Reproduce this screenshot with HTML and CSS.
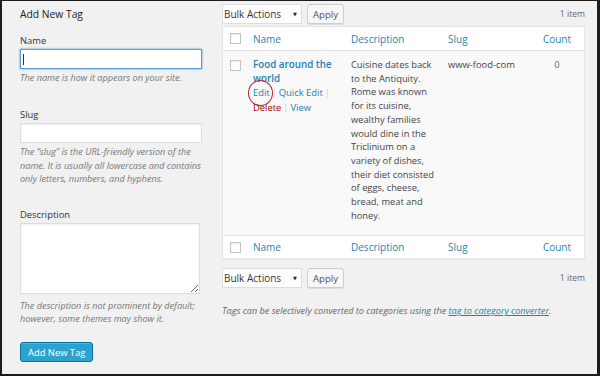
FILE: index.html
```
<!DOCTYPE html>
<html lang="en">

<head>
    <meta charset="UTF-8">
    <meta name="viewport" content="width=device-width, initial-scale=1.0">
    <title>Tags</title>
    <link rel="stylesheet" href="styles.css">
</head>

<body>
    <div class="screen">
        <div class="col-form">
            <h3 class="form-title">Add New Tag</h3>
            <div class="form-field field-name">
                <label>Name</label>
                <div class="text-input focused"><span class="caret"></span></div>
                <p class="help">The name is how it appears on your site.</p>
            </div>
            <div class="form-field field-slug">
                <label>Slug</label>
                <div class="text-input"></div>
                <p class="help">The &ldquo;slug&rdquo; is the URL-friendly version of the name. It is usually all lowercase and contains only letters, numbers, and hyphens.</p>
            </div>
            <div class="form-field field-desc">
                <label>Description</label>
                <textarea class="desc-input"></textarea>
                <p class="help">The description is not prominent by default; however, some themes may show it.</p>
            </div>
            <button class="primary-button">Add New Tag</button>
        </div>

        <div class="col-list">
            <div class="tablenav nav-top">
                <div class="bulk-select">Bulk Actions <span class="arrow">&#9660;</span></div>
                <button class="apply-button">Apply</button>
                <span class="num-items">1 item</span>
            </div>

            <div class="tag-table">
                <div class="row row-head">
                    <div class="cell cb"><span class="checkbox"></span></div>
                    <div class="cell">Name</div>
                    <div class="cell">Description</div>
                    <div class="cell">Slug</div>
                    <div class="cell count">Count</div>
                </div>
                <div class="row row-item">
                    <div class="cell cb"><span class="checkbox"></span></div>
                    <div class="cell name">
                        <a class="row-title">Food around the world</a>
                        <div class="row-actions"><span class="edit-wrap"><a>Edit</a><span class="mark"></span></span><span class="sep">|</span><a>Quick&nbsp;Edit</a><span class="sep">|</span> <a class="delete">Delete</a><span class="sep">|</span><a>View</a></div>
                    </div>
                    <div class="cell desc">Cuisine dates back to the Antiquity. Rome was known for its cuisine, wealthy families would dine in the Triclinium on a variety of dishes, their diet consisted of eggs, cheese, bread, meat and honey.</div>
                    <div class="cell slug">www-food-com</div>
                    <div class="cell count"><a>0</a></div>
                </div>
                <div class="row row-foot">
                    <div class="cell cb"><span class="checkbox"></span></div>
                    <div class="cell">Name</div>
                    <div class="cell">Description</div>
                    <div class="cell">Slug</div>
                    <div class="cell count">Count</div>
                </div>
            </div>

            <div class="tablenav nav-bottom">
                <div class="bulk-select">Bulk Actions <span class="arrow">&#9660;</span></div>
                <button class="apply-button">Apply</button>
                <span class="num-items">1 item</span>
            </div>

            <p class="convert-note">Tags can be selectively converted to categories using the <a>tag to category converter</a>.</p>
        </div>
    </div>
</body>

</html>
```

FILE: styles.css
```
body {
    margin: 0;
    padding: 0;
    font-family: "Open Sans", "DejaVu Sans", sans-serif;
    font-size: 9.4px;
    color: #444;
}

.screen {
    width: 600px;
    height: 376px;
    box-sizing: border-box;
    border-style: solid;
    border-color: #1c1c1c;
    border-width: 1px 3px 2px 2px;
    background: #f1f1f1;
    display: flex;
    gap: 20px;
    padding: 0 12px 0 18px;
}

a {
    color: #2381b1;
}

/* left form */

.col-form {
    width: 182px;
    padding-top: 6px;
}

.form-title {
    margin: 0;
    font-size: 10.3px;
    font-weight: normal;
    line-height: 14px;
    color: #222;
}

.form-field label {
    display: block;
    line-height: 13px;
    color: #333;
    margin-bottom: 2px;
}

.field-name {
    margin-top: 13px;
}

.field-slug {
    margin-top: 24px;
}

.field-desc {
    margin-top: 23px;
}

.text-input {
    height: 20px;
    box-sizing: border-box;
    background: #fff;
    border: 1px solid #ddd;
    box-shadow: inset 0 1px 2px rgba(0, 0, 0, 0.07);
    position: relative;
}

.text-input.focused {
    border-color: #5b9dd9;
    box-shadow: 0 0 2px rgba(30, 140, 190, 0.8);
}

.caret {
    position: absolute;
    left: 2px;
    top: 4px;
    width: 1px;
    height: 11px;
    background: #333;
}

.desc-input {
    display: block;
    width: 180px;
    height: 71px;
    box-sizing: border-box;
    margin: 0;
    background: #fff;
    border: 1px solid #ddd;
    box-shadow: inset 0 1px 2px rgba(0, 0, 0, 0.07);
    resize: vertical;
}

.help {
    margin: 2px 0 0;
    font-size: 9.1px;
    font-style: italic;
    color: #777;
    line-height: 13.3px;
}

.field-desc .help {
    margin-top: 6px;
    line-height: 12.5px;
}

.primary-button {
    margin-top: 17px;
    height: 20px;
    padding: 0 7px;
    background: #2ea2cc;
    border: 1px solid #0074a2;
    border-radius: 3px;
    box-shadow: inset 0 1px 0 rgba(120, 200, 230, 0.5);
    color: #fff;
    font-family: inherit;
    font-size: 9.4px;
}

/* right list */

.col-list {
    width: 363px;
}

.tablenav {
    display: flex;
    align-items: center;
    gap: 5px;
    height: 20px;
}

.nav-top {
    margin-top: 3px;
}

.nav-bottom {
    margin-top: 9px;
}

.bulk-select {
    width: 80px;
    height: 20px;
    box-sizing: border-box;
    padding: 0 0 0 1px;
    background: #fff;
    border: 1px solid #ddd;
    display: flex;
    align-items: center;
    font-size: 10px;
    color: #333;
}

.arrow {
    font-size: 5px;
    margin-left: 12px;
    color: #222;
}

.apply-button {
    height: 20px;
    padding: 0 5px;
    background: #f7f7f7;
    border: 1px solid #ccc;
    border-radius: 3px;
    box-shadow: 0 1px 0 #ddd;
    font-family: inherit;
    font-size: 9.6px;
    color: #555;
}

.num-items {
    margin-left: auto;
    font-size: 8.6px;
    color: #666;
}

.tag-table {
    margin-top: 2px;
    background: #fff;
    border: 1px solid #e5e5e5;
    box-shadow: 0 1px 1px rgba(0, 0, 0, 0.04);
}

.row {
    display: grid;
    grid-template-columns: 22px 98px 97px 90px 1fr;
}

.cell {
    padding: 0 8px;
}

.cell.cb {
    padding: 0 0 0 7px;
}

.checkbox {
    display: block;
    width: 11px;
    height: 11px;
    box-sizing: border-box;
    background: #fff;
    border: 1px solid #c3c3c3;
    box-shadow: inset 0 1px 2px rgba(0, 0, 0, 0.08);
}

.row-head,
.row-foot {
    height: 23px;
    align-items: center;
    font-size: 10px;
    color: #2a86b5;
}

.row-head {
    border-bottom: 1px solid #e1e1e1;
}

.row-foot {
    height: 22px;
    border-top: 1px solid #e1e1e1;
}

.count {
    text-align: center;
}

.row-item {
    background: #f9f9f9;
    padding: 7px 0 13px;
}

.row-item .cb {
    padding-top: 2px;
}

.row-title {
    display: block;
    font-size: 9.8px;
    font-weight: 600;
    line-height: 14px;
}

.row-actions {
    line-height: 14.5px;
}

.sep {
    color: #ccc;
    margin: 0 2px;
}

.edit-wrap {
    position: relative;
}

.mark {
    position: absolute;
    left: -5px;
    top: -6px;
    width: 23px;
    height: 24px;
    border: 1.5px solid #b5232b;
    border-radius: 50%;
}

.delete {
    color: #a00;
}

.desc {
    font-size: 9.3px;
    line-height: 13.7px;
    padding-right: 3px;
}

.convert-note {
    margin: 16px 0 0;
    font-size: 9.1px;
    font-style: italic;
    color: #666;
    line-height: 13px;
}

.convert-note a {
    text-decoration: underline;
}
```
